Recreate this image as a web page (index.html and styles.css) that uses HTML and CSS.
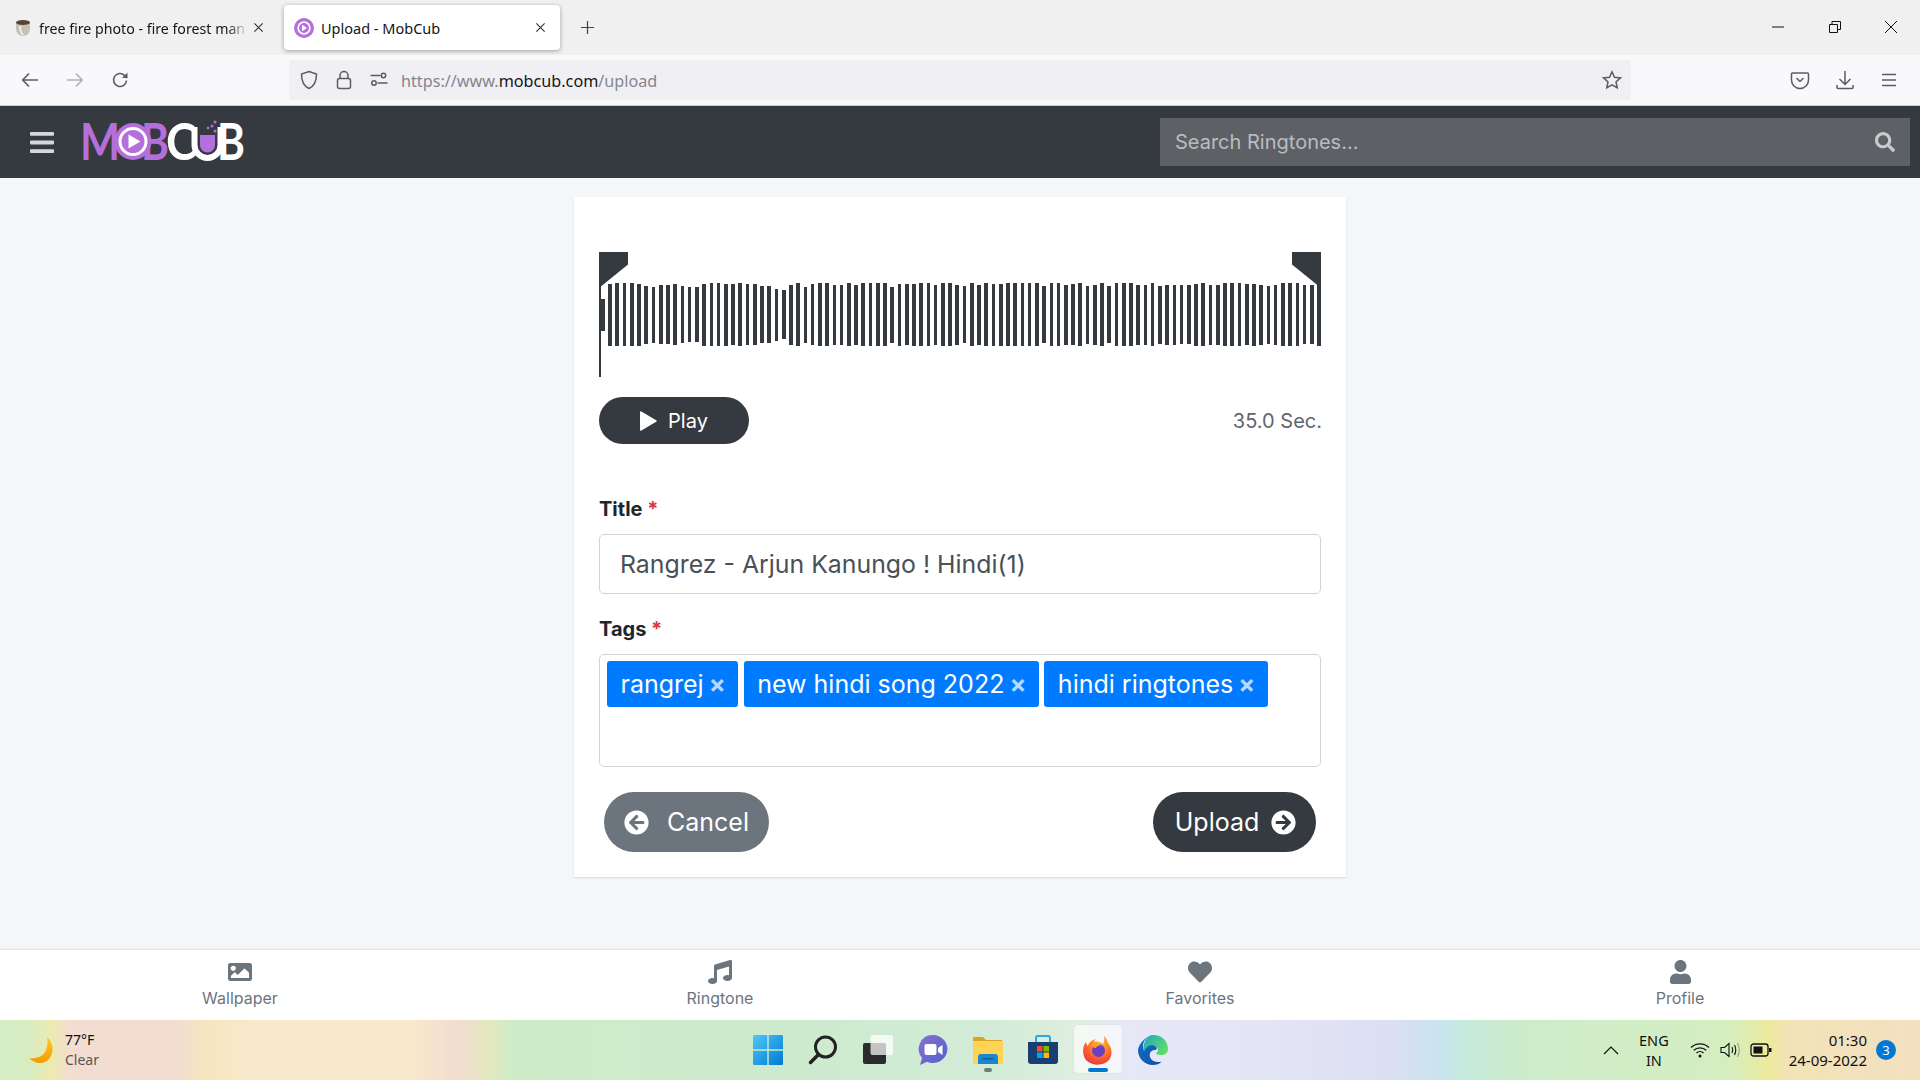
FILE: index.html
```html
<!DOCTYPE html>
<html>
<head>
    <title>Upload - MobCub</title>
    <link rel="stylesheet" href="styles.css">
</head>
<body>
    <!-- browser tabs -->
    <div class="tab-strip">
        <div class="tab">
            <svg class="favicon" viewBox="0 0 18 18"><path d="M2 3.500h14v5.500c0 5-3 8-7 8s-7-3-7-8z" fill="#c4c1b9"/><path d="M5 7c0 4 1 7 3 9h2c-2-2-3-5-3-9z" fill="#f1efe9"/><ellipse cx="9" cy="3.500" rx="7" ry="2.500" fill="#5a4330"/></svg>
            <span class="tab-title">free fire photo - fire forest man</span>
            <svg class="tab-close" viewBox="0 0 12 12"><path d="M1.500 1.500l9 9m0-9l-9 9"/></svg>
        </div>
        <div class="tab tab-active">
            <svg class="favicon" viewBox="0 0 20 20"><circle cx="10" cy="10" r="10" fill="#b56fdc"/><circle cx="10" cy="10" r="6.700" fill="#fff"/><circle cx="10" cy="10" r="5" fill="#b56fdc"/><path d="M8 6.800l5 3.200-5 3.200z" fill="#fff"/></svg>
            <span class="tab-title">Upload - MobCub</span>
            <svg class="tab-close" viewBox="0 0 12 12"><path d="M1.500 1.500l9 9m0-9l-9 9"/></svg>
        </div>
        <svg class="new-tab" viewBox="0 0 16 16"><path d="M8 1v14M1 8h14"/></svg>
        <div class="window-controls">
            <svg viewBox="0 0 14 14"><path d="M1 7h12"/></svg>
            <svg viewBox="0 0 14 14"><path d="M1.500 4.500h8v8h-8zM4 4.500v-3h8.500v8h-3"/></svg>
            <svg viewBox="0 0 14 14"><path d="M1 1l12 12m0-12L1 13"/></svg>
        </div>
    </div>

    <!-- browser toolbar -->
    <div class="toolbar">
        <div class="nav-buttons">
            <svg viewBox="0 0 18 18"><path d="M17 9H2m6-6.500L1.700 9 8 15.500"/></svg>
            <svg class="disabled" viewBox="0 0 18 18"><path d="M1 9h15m-6-6.500L16.300 9 10 15.500"/></svg>
            <svg viewBox="0 0 18 18"><path d="M15.500 9.500a6.500 6.500 0 1 1-2-5.200L16 7"/><path d="M16.500 1.500V7H11" fill="#5b5b66" stroke="none"/></svg>
        </div>
        <div class="url-bar">
            <svg class="url-icon" viewBox="0 0 20 20"><path d="M10 1.500l7.500 2.500c0 8-2 12-7.500 14.500C4.500 16 2.500 12 2.500 4z"/></svg>
            <svg class="url-icon" viewBox="0 0 20 20"><rect x="3.500" y="8.500" width="13" height="10" rx="2"/><path d="M6 8.500V5.500a4 4 0 0 1 8 0v3"/></svg>
            <svg class="url-icon" viewBox="0 0 20 20"><circle cx="14.500" cy="5.500" r="2.200"/><circle cx="5" cy="13" r="2.200"/><path d="M1.500 5.500h10M8.500 13h10"/></svg>
            <span class="url-text">https://www.<b>mobcub.com</b>/upload</span>
            <svg class="url-star" viewBox="0 0 20 20"><path d="M10 1.800l2.500 5.400 5.900.7-4.400 4 1.200 5.800L10 14.800l-5.200 2.900L6 11.900l-4.400-4 5.900-.7z"/></svg>
        </div>
        <div class="toolbar-right">
            <svg viewBox="0 0 20 20"><path d="M2.500 3h15a1 1 0 0 1 1 1v6a8.500 8.500 0 0 1-17 0V4a1 1 0 0 1 1-1z"/><path d="M6.500 8l3.500 3.500L13.500 8"/></svg>
            <svg viewBox="0 0 20 20"><path d="M10 1v13M4.500 9l5.500 5.500L15.500 9M2 15v2.500a1 1 0 0 0 1 1h14a1 1 0 0 0 1-1V15"/></svg>
            <svg viewBox="0 0 20 20"><path d="M3 4.500h14M3 10h14M3 15.500h14"/></svg>
        </div>
    </div>

    <!-- site header -->
    <header class="navbar">
        <svg class="hamburger" viewBox="0 0 448 392"><path d="M16 72h416c8.800 0 16-7.200 16-16V16c0-8.800-7.200-16-16-16H16C7.200 0 0 7.200 0 16v40c0 8.800 7.200 16 16 16zm0 160h416c8.800 0 16-7.200 16-16v-40c0-8.800-7.200-16-16-16H16c-8.800 0-16 7.200-16 16v40c0 8.800 7.200 16 16 16zm0 160h416c8.800 0 16-7.200 16-16v-40c0-8.800-7.200-16-16-16H16c-8.800 0-16 7.200-16 16v40c0 8.800 7.200 16 16 16z"/></svg>
        <svg class="logo" viewBox="0 -12 162 60">
            <text class="logo-purple" x="-3" y="37" textLength="40" lengthAdjust="spacingAndGlyphs">M</text>
            <text class="logo-purple" x="58" y="37" textLength="28" lengthAdjust="spacingAndGlyphs">B</text>
            <circle cx="50" cy="18.500" r="18.500" fill="#b56fdc"/>
            <circle cx="50" cy="18.500" r="13" fill="none" stroke="#fff" stroke-width="3"/>
            <path d="M45.500 11.500l12 7-12 7z" fill="#fff"/>
            <text class="logo-white" x="83" y="37" textLength="31" lengthAdjust="spacingAndGlyphs">C</text>
            <path d="M111.500 4v18a13 13 0 0 0 26 0V4" fill="none" stroke="#fff" stroke-width="6"/>
            <path d="M117 12h15v10a7.500 7.500 0 0 1-15 0z" fill="#b56fdc"/>
            <text class="logo-white" x="134" y="37" textLength="28" lengthAdjust="spacingAndGlyphs">B</text>
            <g fill="#b56fdc"><circle cx="132" cy="8" r="1.500"/><circle cx="129" cy="3" r="1.500"/><circle cx="132" cy="-1" r="1.500"/><circle cx="125" cy="5" r="1.300"/></g>
        </svg>
        <div class="search-box">
            <span class="search-placeholder">Search Ringtones...</span>
            <svg class="search-icon" viewBox="0 0 512 512"><path d="M505 442.700L405.300 343c-4.500-4.500-10.600-7-17-7H372c27.600-35.300 44-79.700 44-128C416 93.100 322.900 0 208 0S0 93.100 0 208s93.100 208 208 208c48.300 0 92.700-16.400 128-44v16.300c0 6.400 2.500 12.500 7 17l99.700 99.700c9.400 9.400 24.600 9.400 33.900 0l28.300-28.300c9.400-9.400 9.400-24.600.1-34zM208 336c-70.700 0-128-57.200-128-128 0-70.700 57.200-128 128-128 70.700 0 128 57.200 128 128 0 70.700-57.200 128-128 128z"/></svg>
        </div>
    </header>

    <main class="content">
        <div class="card">
            <div class="wave" id="wave">
                <div class="wave-cursor"></div>
                <div class="handle handle-left"></div>
                <div class="handle handle-right"></div>
            </div>

            <div class="player-row">
                <button class="btn-play">
                    <svg class="play-icon" viewBox="0 0 18 22"><path d="M1 2.200v17.600q0 1.500 1.400.8l14.800-8.800q1.200-.8 0-1.600L2.400 1.400Q1 .7 1 2.200z"/></svg>
                    Play
                </button>
                <span class="duration">35.0 Sec.</span>
            </div>

            <label class="field-label title-label">Title <span class="required">*</span></label>
            <div class="text-input">Rangrez - Arjun Kanungo ! Hindi(1)</div>

            <label class="field-label tags-label">Tags <span class="required">*</span></label>
            <div class="tags-box">
                <span class="tag">rangrej <i class="tag-x">×</i></span>
                <span class="tag">new hindi song 2022 <i class="tag-x">×</i></span>
                <span class="tag">hindi ringtones <i class="tag-x">×</i></span>
            </div>

            <div class="actions">
                <button class="btn btn-cancel">
                    <svg class="btn-icon" viewBox="0 0 512 512"><path d="M256 504C119 504 8 393 8 256S119 8 256 8s248 111 248 248-111 248-248 248zm28.900-143.600L209.400 288H392c13.300 0 24-10.700 24-24v-16c0-13.300-10.700-24-24-24H209.400l75.500-72.400c9.700-9.300 9.900-24.800.4-34.300l-11-10.900c-9.400-9.400-24.600-9.400-33.900 0L107.700 239c-9.400 9.400-9.400 24.600 0 33.900l132.700 132.700c9.400 9.400 24.600 9.400 33.900 0l11-10.900c9.500-9.500 9.300-25-.4-34.300z"/></svg>
                    Cancel
                </button>
                <button class="btn btn-upload">
                    Upload
                    <svg class="btn-icon" viewBox="0 0 512 512"><path d="M256 8c137 0 248 111 248 248S393 504 256 504 8 393 8 256 119 8 256 8zm-28.900 143.600l75.500 72.400H120c-13.300 0-24 10.700-24 24v16c0 13.300 10.700 24 24 24h182.600l-75.500 72.400c-9.700 9.300-9.900 24.800-.4 34.300l11 10.900c9.400 9.400 24.600 9.400 33.900 0L404.300 273c9.400-9.400 9.400-24.600 0-33.900L271.600 106.300c-9.400-9.400-24.600-9.400-33.900 0l-11 10.900c-9.500 9.600-9.300 25.100.4 34.400z"/></svg>
                </button>
            </div>
        </div>
    </main>

    <!-- site footer nav -->
    <nav class="bottom-nav">
        <a class="bottom-item">
            <span class="bottom-icon"><svg width="24" height="24" viewBox="0 0 512 512"><path d="M464 448H48c-26.510 0-48-21.490-48-48V112c0-26.510 21.490-48 48-48h416c26.510 0 48 21.490 48 48v288c0 26.510-21.490 48-48 48zM112 120c-30.928 0-56 25.072-56 56s25.072 56 56 56 56-25.072 56-56-25.072-56-56-56zM64 384h384V272l-87.515-87.515c-4.686-4.686-12.284-4.686-16.971 0L208 320l-55.515-55.515c-4.686-4.686-12.284-4.686-16.971 0L64 336v48z"/></svg></span>
            Wallpaper
        </a>
        <a class="bottom-item">
            <span class="bottom-icon"><svg width="24" height="24" viewBox="0 0 512 512"><path d="M470.380 1.510L150.410 96A32 32 0 0 0 128 126.510v261.410A139 139 0 0 0 96 384c-53 0-96 28.660-96 64s43 64 96 64 96-28.660 96-64V214.320l256-75v184.610a138.400 138.400 0 0 0-32-3.930c-53 0-96 28.660-96 64s43 64 96 64 96-28.650 96-64V32a32 32 0 0 0-41.620-30.490z"/></svg></span>
            Ringtone
        </a>
        <a class="bottom-item">
            <span class="bottom-icon"><svg width="24" height="24" viewBox="0 0 512 512"><path d="M462.300 62.600C407.500 15.900 326 24.300 275.700 76.200L256 96.500l-19.700-20.300C186.100 24.300 104.500 15.900 49.700 62.600c-62.800 53.600-66.100 149.800-9.900 207.900l193.500 199.800c12.500 12.900 32.800 12.900 45.300 0l193.500-199.800c56.300-58.100 53-154.300-9.800-207.900z"/></svg></span>
            Favorites
        </a>
        <a class="bottom-item">
            <span class="bottom-icon"><svg width="21" height="24" viewBox="0 0 448 512"><path d="M224 256c70.700 0 128-57.300 128-128S294.700 0 224 0 96 57.300 96 128s57.300 128 128 128zm89.600 32h-16.700c-22.200 10.200-46.900 16-72.900 16s-50.600-5.800-72.900-16h-16.700C60.200 288 0 348.200 0 422.400V464c0 26.500 21.500 48 48 48h352c26.500 0 48-21.500 48-48v-41.600c0-74.200-60.200-134.400-134.400-134.400z"/></svg></span>
            Profile
        </a>
    </nav>

    <!-- windows taskbar -->
    <footer class="taskbar">
        <div class="weather">
            <svg class="moon" viewBox="0 0 26 28"><defs><linearGradient id="moonFill" x1="0" y1="0" x2="0" y2="1"><stop offset="0" stop-color="#ffc928"/><stop offset="1" stop-color="#f59a00"/></linearGradient></defs><path d="M19 1c7 6 7.500 17 1 23-5 4.500-13 4-19-2 7 1 13-1 16-6 2.500-4.500 3-10 2-15z" fill="url(#moonFill)"/></svg>
            <div class="weather-text"><span>77°F</span><span class="weather-sub">Clear</span></div>
        </div>
        <div class="task-icons">
            <div class="task-icon">
                <svg viewBox="0 0 30 30"><defs><linearGradient id="winFill" x1="0" y1="0" x2="1" y2="1"><stop offset="0" stop-color="#4fc8f8"/><stop offset="1" stop-color="#0078d4"/></linearGradient></defs><path d="M0 1a1 1 0 0 1 1-1h13.300v14.300H0zM15.700 0H29a1 1 0 0 1 1 1v13.300H15.700zM0 15.700h14.300V30H1a1 1 0 0 1-1-1zM15.700 15.700H30V29a1 1 0 0 1-1 1H15.700z" fill="url(#winFill)"/></svg>
            </div>
            <div class="task-icon">
                <svg viewBox="0 0 30 30"><circle cx="17.500" cy="12" r="10" fill="none" stroke="#222" stroke-width="3"/><path d="M10.500 19.500L2.500 27.500" stroke="#222" stroke-width="3.500" stroke-linecap="round"/></svg>
            </div>
            <div class="task-icon">
                <svg viewBox="0 0 30 30"><rect x="0" y="8" width="23" height="21" rx="2" fill="#2b2b2b"/><rect x="7.500" y="0" width="22.500" height="20" rx="2" fill="#fff" fill-opacity=".72"/></svg>
            </div>
            <div class="task-icon">
                <svg viewBox="0 0 30 30"><defs><linearGradient id="chatFill" x1="0" y1="0" x2="1" y2="1"><stop offset="0" stop-color="#8a6fd1"/><stop offset="1" stop-color="#4e62cc"/></linearGradient></defs><path d="M15 0a14.500 14 0 1 1-6 26.800L2 30l2-7A14 14 0 0 1 15 0z" fill="url(#chatFill)"/><rect x="6.500" y="9" width="12" height="11" rx="2" fill="#fff"/><path d="M20 13l4.500-3v10L20 17z" fill="#fff"/></svg>
            </div>
            <div class="task-icon">
                <svg viewBox="0 0 30 30"><path d="M0 3a1 1 0 0 1 1-1h9l3 3h16v6H0z" fill="#d9a520"/><path d="M0 6h30v22a1 1 0 0 1-1 1H1a1 1 0 0 1-1-1z" fill="#ffd454"/><path d="M5 22a3 3 0 0 1 3-3h14a3 3 0 0 1 3 3v7H5z" fill="#1a86d0"/><rect x="10" y="23" width="10" height="1.500" fill="#0d5c9c"/></svg>
                <span class="running-dot"></span>
            </div>
            <div class="task-icon">
                <svg viewBox="0 0 30 30"><path d="M8 7V3a2 2 0 0 1 2-2h10a2 2 0 0 1 2 2v4" fill="none" stroke="#27a9e3" stroke-width="2"/><path d="M0 7h30v19a3 3 0 0 1-3 3H3a3 3 0 0 1-3-3z" fill="#173f73"/><rect x="9" y="11" width="5.500" height="5.500" fill="#f25022"/><rect x="15.500" y="11" width="5.500" height="5.500" fill="#7fba00"/><rect x="9" y="17.500" width="5.500" height="5.500" fill="#00a4ef"/><rect x="15.500" y="17.500" width="5.500" height="5.500" fill="#ffb900"/></svg>
            </div>
            <div class="task-icon task-active">
                <svg viewBox="0 0 30 30"><defs><radialGradient id="foxFill" cx=".6" cy=".25" r=".9"><stop offset="0" stop-color="#ffbd2e"/><stop offset=".5" stop-color="#ff6b2b"/><stop offset="1" stop-color="#e6224c"/></radialGradient></defs><path d="M21 1c3 3 3 5 4 7 4 5 5 12 1 17-5 6-16 6-22 1C-1 21-1 12 3 7c0 2 1 3 2 4 1-4 4-6 8-7-1 1-2 2-2 3 3-1 7 0 9 2 1-2 2-5 1-8z" fill="url(#foxFill)"/><circle cx="15.500" cy="15.500" r="6.500" fill="#6b3fbf"/><path d="M8 10c3-2 8-2 11 1-3-1-5 0-6 2-2 0-4-1-5-3z" fill="#ff9a2b"/></svg>
                <span class="active-bar"></span>
            </div>
            <div class="task-icon">
                <svg viewBox="0 0 30 30"><defs><linearGradient id="edgeTop" x1="0" y1="0" x2="1" y2=".6"><stop offset="0" stop-color="#1fa3c8"/><stop offset="1" stop-color="#5fdc68"/></linearGradient><linearGradient id="edgeLow" x1="0" y1="0" x2="1" y2="1"><stop offset="0" stop-color="#1173c9"/><stop offset="1" stop-color="#0f4fa0"/></linearGradient></defs><path d="M15 0c9 0 15 6 15 14 0 4-3 6-7 6-3 0-5-1-5-2 2-1 3-3 1-5-3-3-10-2-13 3C4 11 8 0 15 0z" fill="url(#edgeTop)"/><path d="M6 16c3-6 9-7 12-4 1 1 1 3-1 3-4 0-6 3-5 7 1 3 4 5 9 5 1 0 2 0 3-1-2 3-6 4-9 4-9 0-15-7-15-15C0 12 4 4 12 1 7 3 3 9 6 16z" fill="url(#edgeLow)"/></svg>
            </div>
        </div>
        <div class="tray">
            <svg class="tray-chevron" viewBox="0 0 16 10"><path d="M1 9l7-7 7 7"/></svg>
            <div class="tray-lang"><span>ENG</span><span>IN</span></div>
            <svg class="tray-wifi" viewBox="0 0 20 16"><path d="M1 5.500a13 13 0 0 1 18 0M3.800 8.300a9 9 0 0 1 12.400 0M6.500 11a5 5 0 0 1 7 0"/><circle cx="10" cy="14" r="1.500" fill="#111" stroke="none"/></svg>
            <svg class="tray-sound" viewBox="0 0 22 16"><path d="M1 5.500h3.500L9 1.500v13l-4.500-4H1zM12 5q1.500 3 0 6M14.500 3q2.500 5 0 10"/><path class="sound-faint" d="M17.500 1q3.500 7 0 14"/></svg>
            <svg class="tray-battery" viewBox="0 0 22 14"><rect x="1" y="1" width="17" height="12" rx="2.500"/><rect x="3.500" y="3.500" width="9" height="7" fill="#111" stroke="none"/><rect x="19" y="5" width="2.500" height="4" fill="#111" stroke="none"/></svg>
            <div class="tray-clock"><span>01:30</span><span>24-09-2022</span></div>
            <span class="tray-badge">3</span>
        </div>
    </footer>

    <script src="script.js"></script>
</body>
</html>
```

FILE: styles.css
```css
* {
    box-sizing: border-box;
}

body {
    font-family: 'Inter', sans-serif;
    margin: 0;
    height: 100vh;
    overflow: hidden;
    display: flex;
    flex-direction: column;
    background-color: #f4f6f9;
}

svg {
    display: block;
}

/* browser tabs */
.tab-strip {
    height: 55px;
    background-color: #f0f0f0;
    display: flex;
    align-items: center;
    padding-left: 14px;
    font-family: 'Noto Sans', sans-serif;
}

.tab {
    width: 256px;
    height: 45px;
    display: flex;
    align-items: center;
    font-size: 14.2px;
    color: #15141a;
}

.tab-active {
    width: 276px;
    margin-left: 14px;
    padding-left: 10px;
    background-color: #fff;
    border-radius: 4px;
    box-shadow: 0 1px 4px rgba(0, 0, 0, 0.35);
    font-size: 14.5px;
}

.favicon {
    width: 18px;
    height: 18px;
    flex: none;
    margin-right: 7px;
}

.tab-active .favicon {
    width: 20px;
    height: 20px;
}

.tab-title {
    flex: 1;
    padding-top: 1px;
    white-space: nowrap;
    overflow: hidden;
    -webkit-mask-image: linear-gradient(to right, #000 90%, transparent);
    mask-image: linear-gradient(to right, #000 90%, transparent);
}

.tab-active .tab-title {
    -webkit-mask-image: none;
    mask-image: none;
}

.tab-close {
    width: 11px;
    height: 11px;
    flex: none;
    margin: 0 6px 0 5px;
    fill: none;
    stroke: #333;
    stroke-width: 1.2;
}

.tab-active .tab-close {
    margin: 0 14px 0 0;
}

.new-tab {
    width: 15px;
    height: 15px;
    margin-left: 20px;
    fill: none;
    stroke: #444;
    stroke-width: 1.3;
}

.window-controls {
    margin-left: auto;
    margin-right: 22px;
    margin-top: -1px;
    display: flex;
    gap: 42.5px;
}

.window-controls svg {
    width: 14px;
    height: 14px;
    fill: none;
    stroke: #111;
    stroke-width: 1;
}

/* browser toolbar */
.toolbar {
    height: 51px;
    background-color: #f9f9fb;
    border-bottom: 1px solid #ccc;
    display: flex;
    align-items: center;
    padding-bottom: 1px;
}

.nav-buttons {
    display: flex;
    gap: 27px;
    padding-left: 21px;
    width: 289px;
}

.nav-buttons svg {
    width: 18px;
    height: 18px;
    fill: none;
    stroke: #5b5b66;
    stroke-width: 1.6;
}

.nav-buttons .disabled {
    opacity: 0.45;
}

.url-bar {
    width: 1342px;
    height: 40px;
    background-color: #f0f0f4;
    border-radius: 4px;
    display: flex;
    align-items: center;
    padding-left: 10px;
    padding-right: 9px;
    font-family: 'Noto Sans', sans-serif;
}

.url-icon {
    width: 20px;
    height: 20px;
    margin-right: 15px;
    fill: none;
    stroke: #5b5b66;
    stroke-width: 1.5;
}

.url-text {
    font-size: 16.2px;
    color: #85858d;
    margin-left: -3px;
    padding-top: 2px;
}

.url-text b {
    font-weight: 400;
    color: #15141a;
}

.url-star {
    width: 20px;
    height: 20px;
    margin-left: auto;
    fill: none;
    stroke: #5b5b66;
    stroke-width: 1.5;
}

.toolbar-right {
    display: flex;
    gap: 24.5px;
    margin-left: 159px;
}

.toolbar-right svg {
    width: 20px;
    height: 20px;
    fill: none;
    stroke: #5b5b66;
    stroke-width: 1.5;
}

/* site header */
.navbar {
    height: 72px;
    background-color: #343a40;
    display: flex;
    align-items: center;
    padding: 0 10px 0 30px;
}

.hamburger {
    width: 24px;
    height: 21px;
    fill: #d6d7d8;
    margin-right: 29px;
}

.logo {
    width: 162px;
    height: 60px;
    margin-top: -2px;
    font-family: 'Lato', sans-serif;
    font-size: 51px;
    font-weight: 700;
}

.logo-purple {
    fill: #b56fdc;
}

.logo-white {
    fill: #fff;
}

.search-box {
    margin-left: auto;
    width: 750px;
    height: 48px;
    background-color: #5d6166;
    display: flex;
    align-items: center;
    justify-content: space-between;
    padding: 0 15px;
    font-size: 20px;
    color: #b9bcbf;
}

.search-icon {
    width: 20px;
    height: 20px;
    fill: #c9cbcd;
}

/* upload card */
.content {
    flex: 1;
    display: flex;
    justify-content: center;
    align-items: flex-start;
    padding-top: 19px;
}

.card {
    width: 772px;
    background-color: #fff;
    box-shadow: 0 1px 2px rgba(0, 0, 0, 0.12);
    padding: 55px 25px 25px;
}

.wave {
    position: relative;
    height: 125px;
    display: flex;
    align-items: center;
    gap: 3.59px;
    padding-left: 2px;
}

.wave-bar {
    width: 3.67px;
    flex: none;
    background-color: #343a40;
}

.wave-cursor {
    position: absolute;
    left: 0;
    top: 0;
    bottom: 0;
    width: 2px;
    background-color: #343a40;
}

.handle {
    position: absolute;
    top: 0;
    width: 29px;
    height: 36px;
    background-color: #343a40;
}

.handle-left {
    left: 0;
    clip-path: polygon(0 0, 100% 0, 100% 35%, 0 100%);
}

.handle-right {
    right: 0;
    clip-path: polygon(0 0, 100% 0, 100% 100%, 0 35%);
}

.player-row {
    margin-top: 20px;
    display: flex;
    align-items: center;
    justify-content: space-between;
}

.btn-play {
    width: 150px;
    height: 47px;
    border: none;
    border-radius: 24px;
    padding: 0 1px 0 0;
    background-color: #343a40;
    color: #fff;
    font-family: inherit;
    font-size: 20px;
    display: flex;
    align-items: center;
    justify-content: center;
    gap: 11px;
}

.play-icon {
    width: 18px;
    height: 22px;
    fill: #fff;
}

.duration {
    font-size: 20px;
    color: #5f666c;
    margin-right: -1px;
}

.field-label {
    display: block;
    font-size: 20px;
    line-height: 30px;
    font-weight: 700;
    color: #212529;
    margin-bottom: 10px;
}

.title-label {
    margin-top: 50px;
}

.tags-label {
    margin-top: 20px;
}

.required {
    color: #dc3545;
}

.text-input {
    height: 60px;
    border: 1px solid #ced4da;
    border-radius: 5px;
    padding: 0 20px;
    display: flex;
    align-items: center;
    font-size: 24.85px;
    color: #495057;
}

.tags-box {
    height: 113px;
    border: 1px solid #ced4da;
    border-radius: 5px;
    padding: 6px 7px;
    display: flex;
    align-items: flex-start;
    gap: 5.5px;
}

.tag {
    height: 46px;
    background-color: #007bff;
    color: #fff;
    border-radius: 3px;
    padding: 0 12.5px 0 13.5px;
    display: flex;
    align-items: center;
    gap: 5px;
    font-size: 25px;
    white-space: nowrap;
}

.tag-x {
    font-style: normal;
    font-weight: 700;
    font-size: 25px;
    color: rgba(255, 255, 255, 0.72);
}

.actions {
    margin-top: 25px;
    padding: 0 5px;
    display: flex;
    justify-content: space-between;
}

.btn {
    height: 60px;
    border: none;
    border-radius: 30px;
    color: #fff;
    font-family: inherit;
    font-size: 25px;
    display: flex;
    align-items: center;
    justify-content: center;
}

.btn-cancel {
    width: 165px;
    background-color: #6c757d;
    gap: 18px;
}

.btn-upload {
    width: 163px;
    background-color: #343a40;
    gap: 12px;
    padding-left: 8px;
}

.btn-icon {
    width: 25px;
    height: 25px;
    fill: #fff;
}

/* bottom nav */
.bottom-nav {
    height: 71px;
    background-color: #fff;
    border-top: 1px solid #dee2e6;
    display: grid;
    grid-template-columns: repeat(4, 1fr);
}

.bottom-item {
    display: flex;
    flex-direction: column;
    align-items: center;
    padding-top: 10px;
    font-size: 16px;
    line-height: 20px;
    color: #6c757d;
}

.bottom-icon {
    height: 28px;
}

.bottom-icon svg {
    fill: #6c757d;
}

/* taskbar */
.taskbar {
    height: 60px;
    background: linear-gradient(to right, #d5ecc5 0, #d8ecc0 30px, #ecebb0 51px, #f3ddd0 70px, #f2ddd0 178px, #f5e6c0 204px, #f9e9cc 255px, #f9e9cc 408px, #f1dccf 460px, #e3e8bd 490px, #cfecc8 510px, #cdeacf 800px, #d3ecd8 1000px, #e0efe0 1086px, #e6e8f6 1120px, #e4e6f6 1257px, #dcdff2 1388px, #c8e4ee 1445px, #c5eade 1460px, #cdeccb 1519px, #d5eec0 1728px, #ecea9c 1770px, #f2e3b7 1785px, #f3e0c0 1920px);
    display: grid;
    grid-template-columns: 1fr auto 1fr;
    align-items: center;
    font-family: 'Noto Sans', sans-serif;
    font-size: 14px;
    color: #111;
}

.weather {
    display: flex;
    align-items: center;
    gap: 11px;
    padding-left: 28px;
}

.moon {
    width: 26px;
    height: 28px;
}

.weather-text {
    display: flex;
    flex-direction: column;
    line-height: 20px;
}

.weather-sub {
    color: #555;
}

.task-icons {
    display: flex;
    gap: 25px;
}

.task-icon {
    position: relative;
    width: 30px;
    height: 30px;
}

.task-icon svg {
    width: 30px;
    height: 30px;
}

.task-active::before {
    content: "";
    position: absolute;
    left: -9px;
    top: -10px;
    width: 48px;
    height: 48px;
    background-color: rgba(255, 255, 255, 0.6);
    border-radius: 4px;
    box-shadow: 0 0 1px rgba(0, 0, 0, 0.2);
}

.task-active svg {
    position: relative;
}

.active-bar {
    position: absolute;
    left: 5px;
    top: 33px;
    width: 20px;
    height: 4px;
    border-radius: 2px;
    background-color: #0078d4;
}

.running-dot {
    position: absolute;
    left: 11px;
    top: 33px;
    width: 8px;
    height: 4px;
    border-radius: 2px;
    background-color: #6f7f76;
}

.tray {
    display: flex;
    align-items: center;
    justify-content: flex-end;
    padding-right: 24px;
}

.tray-chevron {
    width: 16px;
    height: 10px;
    fill: none;
    stroke: #111;
    stroke-width: 1.2;
    margin-right: 20px;
}

.tray-lang {
    display: flex;
    flex-direction: column;
    align-items: center;
    line-height: 20px;
    font-size: 14.5px;
    margin-right: 21px;
}

.tray-wifi {
    width: 20px;
    height: 16px;
    fill: none;
    stroke: #111;
    stroke-width: 1.3;
    margin-right: 10px;
}

.tray-sound {
    width: 22px;
    height: 16px;
    fill: none;
    stroke: #111;
    stroke-width: 1.1;
    margin-right: 8px;
}

.sound-faint {
    stroke: #9a9a9a;
}

.tray-battery {
    width: 22px;
    height: 14px;
    fill: none;
    stroke: #111;
    stroke-width: 1.3;
    margin-right: 17px;
}

.tray-clock {
    display: flex;
    flex-direction: column;
    align-items: flex-end;
    line-height: 20px;
    font-size: 15px;
    margin-right: 9px;
}

.tray-badge {
    width: 20px;
    height: 20px;
    border-radius: 50%;
    background-color: #0078d4;
    color: #fff;
    font-size: 13px;
    display: flex;
    align-items: center;
    justify-content: center;
}
```

FILE: script.js
```js
// Peak heights of the waveform, in pixels, left to right
const peaks = [
    32, 62, 63, 63, 63, 62, 58, 56, 59, 59, 61, 57, 55, 55, 62, 63, 63, 62, 61, 63,
    61, 61, 57, 57, 52, 49, 60, 63, 56, 61, 63, 63, 60, 60, 63, 60, 63, 63, 63, 63,
    56, 62, 61, 62, 63, 63, 60, 63, 63, 60, 57, 63, 60, 63, 62, 62, 63, 63, 63, 63,
    63, 57, 63, 63, 60, 61, 63, 58, 60, 63, 57, 63, 63, 63, 60, 60, 63, 58, 60, 60,
    59, 59, 62, 63, 60, 60, 63, 63, 63, 61, 62, 60, 58, 60, 63, 63, 63, 59, 59, 63
];

const wave = document.getElementById('wave');
peaks.forEach(function (peak) {
    const bar = document.createElement('span');
    bar.className = 'wave-bar';
    bar.style.height = peak + 'px';
    wave.appendChild(bar);
});
```
